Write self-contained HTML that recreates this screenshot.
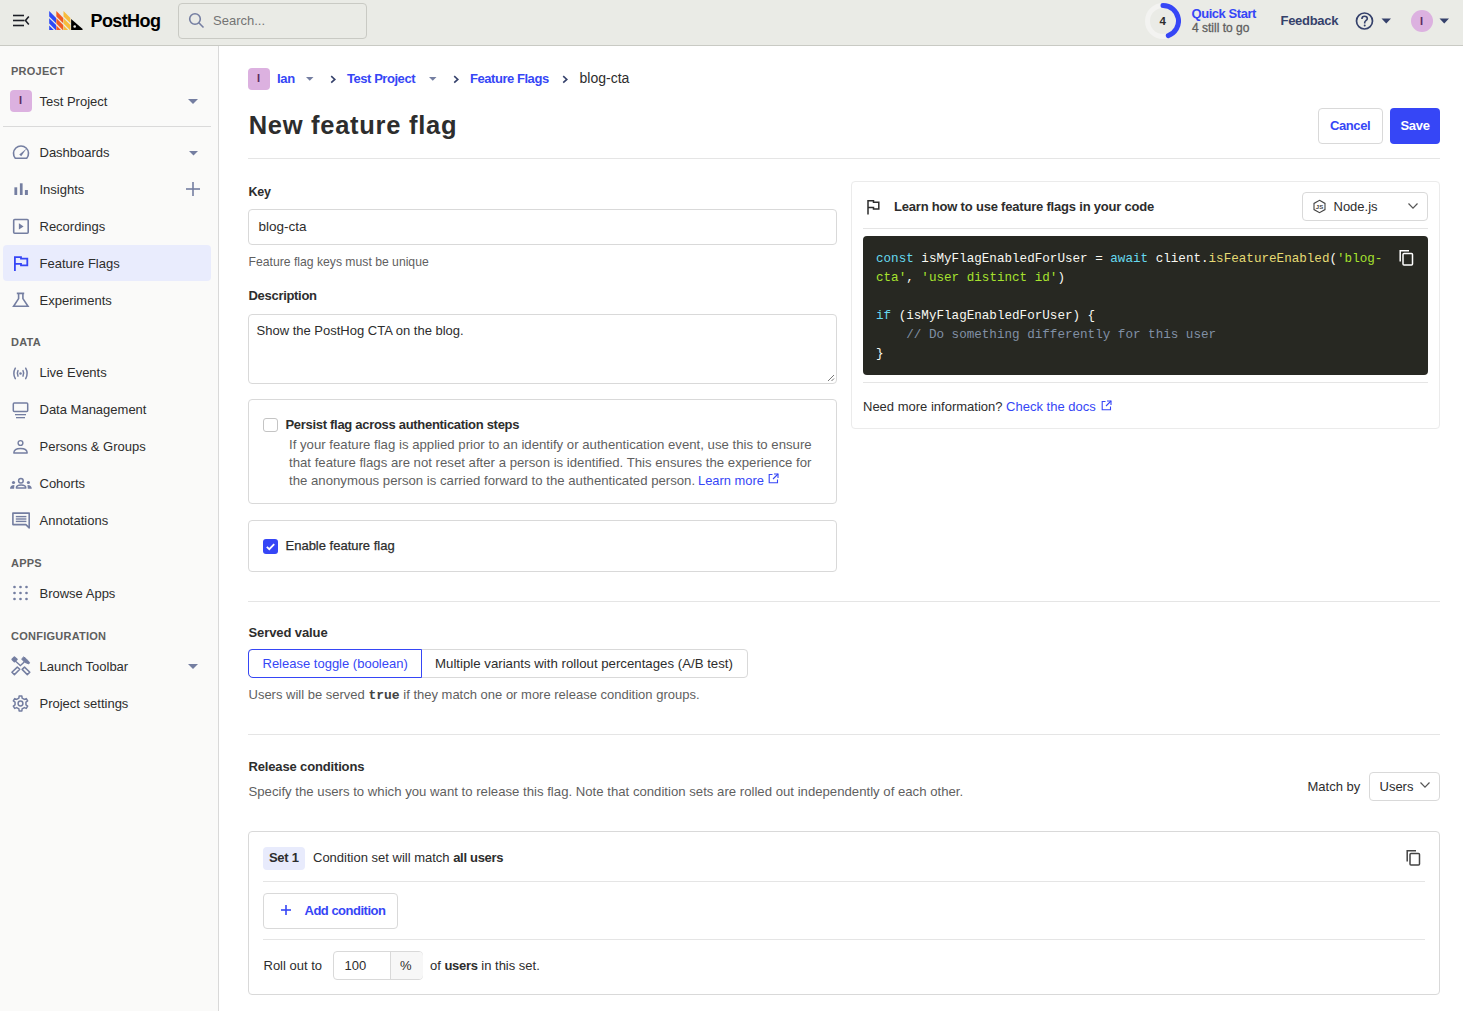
<!DOCTYPE html>
<html><head><meta charset="utf-8"><style>
html,body{margin:0;padding:0;}
body{width:1463px;height:1011px;overflow:hidden;position:relative;background:#fff;font-family:"Liberation Sans",sans-serif;color:#2d2d2d;}
.t{position:absolute;white-space:nowrap;line-height:20px;}
.r{position:absolute;}
.t b{font-weight:700;letter-spacing:-0.3px;}
pre.code{margin:0;font-family:"Liberation Mono",monospace;white-space:pre;}
</style></head><body>
<div class="r" style="left:0px;top:0px;width:1463px;height:45px;background:#eaebe6;border-bottom:1px solid #c9cac4;"></div>
<svg class="r" style="left:11px;top:13px;" width="20" height="15" viewBox="0 0 20 15"><g stroke="#1d1f27" stroke-width="1.6" fill="none" stroke-linecap="butt"><line x1="2" y1="2.5" x2="13" y2="2.5"/><line x1="2" y1="7.5" x2="13.5" y2="7.5"/><line x1="2" y1="12.5" x2="13" y2="12.5"/><polyline points="17.8,3.5 14.5,7.5 17.8,11.5" stroke-linejoin="miter"/></g></svg>
<svg class="r" style="left:49px;top:11px;" width="35" height="20" viewBox="0 0 35 20"><path d="M0.2,0 L7.1000000000000005,6.9 L7.1000000000000005,12.3 L0.2,5.4Z M0.2,7.2 L7.1000000000000005,14.100000000000001 L7.1000000000000005,19 L6.6000000000000005,19 L0.2,12.6Z M0.2,14.4 L4.8,19 L0.2,19Z" fill="#2c48f6"/><path d="M7.3500000000000005,0 L14.25,6.9 L14.25,12.3 L7.3500000000000005,5.4Z M7.3500000000000005,7.2 L14.25,14.100000000000001 L14.25,19 L13.75,19 L7.3500000000000005,12.6Z M7.3500000000000005,14.4 L11.95,19 L7.3500000000000005,19Z" fill="#f15a22"/><path d="M14.5,0 L21.4,6.9 L21.4,12.3 L14.5,5.4Z M14.5,7.2 L21.4,14.100000000000001 L21.4,19 L20.9,19 L14.5,12.6Z M14.5,14.4 L19.1,19 L14.5,19Z" fill="#f7bc3c"/><path d="M22.1,8 L22.1,19 L32.8,19 Q34.4,19 33.4,17.8 Z" fill="#000"/><circle cx="25.7" cy="15.5" r="1.3" fill="#eaebe6"/></svg>
<div class="t " style="left:90.5px;top:10.76px;font-size:18px;font-weight:700;color:#000;letter-spacing:-0.6px;">PostHog</div>
<div class="r" style="left:178px;top:3px;width:189px;height:36px;box-sizing:border-box;border:1px solid #c9cac4;border-radius:4px;background:#eaebe6;"></div>
<svg class="r" style="left:187px;top:11px;" width="20" height="20" viewBox="0 0 20 20"><g fill="none" stroke="#747ea1" stroke-width="1.6"><circle cx="8" cy="8" r="5.3"/><line x1="11.8" y1="11.8" x2="16.5" y2="16.5"/></g></svg>
<div class="t " style="left:213px;top:10.50px;font-size:13px;color:#747474;">Search...</div>
<svg class="r" style="left:1145px;top:3px;" width="36" height="36" viewBox="0 0 36 36"><circle cx="18" cy="18" r="15.5" fill="none" stroke="#f3f3f1" stroke-width="5"/><path d="M18,2.5 A15.5,15.5 0 0 1 23.3,32.57" fill="none" stroke="#3646f6" stroke-width="5" stroke-linecap="round"/></svg>
<div class="t " style="left:1159.5px;top:11.02px;font-size:11.5px;font-weight:700;color:#2d2d2d;">4</div>
<div class="t " style="left:1191.5px;top:3.50px;font-size:13px;font-weight:700;color:#3646f6;letter-spacing:-0.45px;">Quick Start</div>
<div class="t " style="left:1192px;top:17.84px;font-size:12px;color:#5f5f5f;-webkit-text-stroke:0.3px #5f5f5f;">4 still to go</div>
<div class="t " style="left:1280.5px;top:10.50px;font-size:13px;font-weight:700;color:#35416b;letter-spacing:-0.3px;">Feedback</div>
<svg class="r" style="left:1355px;top:11px;" width="20" height="20" viewBox="0 0 20 20"><circle cx="9.5" cy="10" r="8" fill="none" stroke="#35416b" stroke-width="1.7"/><path d="M6.9,7.9 C6.9,6.2 8.1,5.3 9.6,5.3 C11.1,5.3 12.3,6.3 12.3,7.7 C12.3,9.3 9.7,9.6 9.7,11.6 L9.7,12.4" fill="none" stroke="#35416b" stroke-width="1.6"/><circle cx="9.7" cy="14.6" r="1" fill="#35416b"/></svg>
<svg class="r" style="left:1381px;top:18px;" width="11" height="6" viewBox="0 0 11 6"><path d="M0.5,0.5 L10,0.5 L5.25,5.5Z" fill="#35416b"/></svg>
<div class="r" style="left:1411px;top:10px;width:22px;height:22px;background:#dcb1e0;border-radius:50%;"></div>
<div class="t " style="left:1420px;top:10.69px;font-size:11px;font-weight:700;color:#5b2b5d;">I</div>
<svg class="r" style="left:1439px;top:18px;" width="11" height="6" viewBox="0 0 11 6"><path d="M0.5,0.5 L10,0.5 L5.25,5.5Z" fill="#35416b"/></svg>
<div class="r" style="left:0px;top:46px;width:218px;height:965px;background:#fafaf9;border-right:1px solid #d9d9d9;"></div>
<div class="t " style="left:11px;top:61.19px;font-size:11px;font-weight:700;color:#5f5f5f;letter-spacing:0.25px;">PROJECT</div>
<div class="r" style="left:10px;top:90px;width:22px;height:22px;background:#dcb1e0;border-radius:4px;"></div>
<div class="t " style="left:19px;top:90.19px;font-size:11px;font-weight:700;color:#5b2b5d;">I</div>
<div class="t " style="left:39.5px;top:91.50px;font-size:13px;color:#2d2d2d;">Test Project</div>
<svg class="r" style="left:188px;top:99px;" width="10" height="5" viewBox="0 0 10 5"><path d="M0,0 L10,0 L5.0,5Z" fill="#747ea1"/></svg>
<div class="r" style="left:3px;top:126px;width:208px;height:1px;background:#dadada;"></div>
<svg class="r" style="left:12px;top:144px;" width="18" height="18" viewBox="0 0 18 18"><path d="M3.3,14.3 A7.5,7.5 0 1 1 14.7,14.3 Z" fill="none" stroke="#747ea1" stroke-width="1.6" stroke-linejoin="round"/><path d="M7.3,10.6 L14.6,4.4 L9.2,12.2 Z" fill="#747ea1"/></svg>
<div class="t " style="left:39.5px;top:142.50px;font-size:13px;color:#2d2d2d;">Dashboards</div>
<svg class="r" style="left:189px;top:151px;" width="9" height="4.5" viewBox="0 0 9 4.5"><path d="M0,0 L9,0 L4.5,4.5Z" fill="#747ea1"/></svg>
<svg class="r" style="left:12px;top:181px;" width="18" height="18" viewBox="0 0 18 18"><g fill="#747ea1"><rect x="2.4" y="6.3" width="2.8" height="7.7"/><rect x="7.9" y="2.3" width="2.7" height="11.7"/><rect x="12.9" y="9" width="3" height="5"/></g></svg>
<div class="t " style="left:39.5px;top:179.50px;font-size:13px;color:#2d2d2d;">Insights</div>
<svg class="r" style="left:185px;top:181px;" width="16" height="16" viewBox="0 0 16 16"><g stroke="#747ea1" stroke-width="1.6"><line x1="8" y1="1" x2="8" y2="15"/><line x1="1" y1="8" x2="15" y2="8"/></g></svg>
<svg class="r" style="left:12px;top:218px;" width="18" height="18" viewBox="0 0 18 18"><rect x="1.7" y="1.5" width="14.5" height="13.7" rx="1" fill="none" stroke="#747ea1" stroke-width="1.6"/><path d="M6.9,5.2 L11.6,8.4 L6.9,11.6Z" fill="#747ea1"/></svg>
<div class="t " style="left:39.5px;top:216.50px;font-size:13px;color:#2d2d2d;">Recordings</div>
<div class="r" style="left:3px;top:245px;width:208px;height:36px;background:#e9ecfd;border-radius:4px;"></div>
<svg class="r" style="left:12px;top:255px;" width="18" height="18" viewBox="0 0 18 18"><path d="M2.9,16 L2.9,2.1 L9,2.1 L9,3.6 L15.3,3.6 L15.3,10.4 L9,10.4 L9,8.9 L2.9,8.9" fill="none" stroke="#3646f6" stroke-width="1.8"/></svg>
<div class="t " style="left:39.5px;top:253.50px;font-size:13px;color:#2d2d2d;">Feature Flags</div>
<svg class="r" style="left:12px;top:292px;" width="18" height="18" viewBox="0 0 18 18"><path d="M4.8,1.4 L12.2,1.4 M6.6,1.4 L6.6,6.6 L1.6,14.3 L16,14.3 L10.9,6.6 L10.9,1.4" fill="none" stroke="#747ea1" stroke-width="1.6" stroke-linejoin="miter"/></svg>
<div class="t " style="left:39.5px;top:290.50px;font-size:13px;color:#2d2d2d;">Experiments</div>
<div class="t " style="left:11px;top:332.19px;font-size:11px;font-weight:700;color:#5f5f5f;letter-spacing:0.25px;">DATA</div>
<svg class="r" style="left:12px;top:365px;" width="18" height="18" viewBox="0 0 18 18"><g fill="none" stroke="#747ea1" stroke-width="1.5" stroke-linecap="round"><path d="M3.3,3.2 Q0.4,8.4 3.3,13.6"/><path d="M13.7,3.2 Q16.6,8.4 13.7,13.6"/><path d="M6,5.6 Q4.5,8.4 6,11.2"/><path d="M11,5.6 Q12.5,8.4 11,11.2"/></g><circle cx="8.5" cy="8.4" r="1.25" fill="#747ea1"/></svg>
<div class="t " style="left:39.5px;top:362.50px;font-size:13px;color:#2d2d2d;">Live Events</div>
<svg class="r" style="left:12px;top:402px;" width="18" height="18" viewBox="0 0 18 18"><rect x="1.3" y="1" width="14.4" height="8.6" rx="1" fill="none" stroke="#747ea1" stroke-width="1.5"/><rect x="3" y="12" width="11" height="1.3" fill="#747ea1"/><rect x="4" y="15" width="9" height="1.3" fill="#747ea1"/></svg>
<div class="t " style="left:39.5px;top:399.50px;font-size:13px;color:#2d2d2d;">Data Management</div>
<svg class="r" style="left:12px;top:439px;" width="18" height="18" viewBox="0 0 18 18"><circle cx="8.5" cy="4" r="2.4" fill="none" stroke="#747ea1" stroke-width="1.4"/><path d="M1.8,14 Q1.8,9.5 8.5,9.5 Q15.2,9.5 15.2,14 Z" fill="none" stroke="#747ea1" stroke-width="1.4" stroke-linejoin="round"/></svg>
<div class="t " style="left:39.5px;top:436.50px;font-size:13px;color:#2d2d2d;">Persons &amp; Groups</div>
<svg class="r" style="left:8px;top:474px;" width="28" height="20" viewBox="0 0 28 20"><circle cx="12.9" cy="6.7" r="2.3" fill="none" stroke="#747ea1" stroke-width="1.5"/><path d="M8.4,14 C8.4,11.6 10.4,11 13.1,11 C15.8,11 17.8,11.6 17.8,14 Z" fill="none" stroke="#747ea1" stroke-width="1.5" stroke-linejoin="round"/><circle cx="5.5" cy="8.5" r="1.6" fill="#747ea1"/><circle cx="20.4" cy="8.5" r="1.6" fill="#747ea1"/><path d="M2,14.8 C2,12.5 3.5,11.1 6.4,11.1 L6.1,14.8 Z M23.8,14.8 C23.8,12.5 22.3,11.1 19.5,11.1 L19.8,14.8 Z" fill="#747ea1"/></svg>
<div class="t " style="left:39.5px;top:473.50px;font-size:13px;color:#2d2d2d;">Cohorts</div>
<svg class="r" style="left:12px;top:512px;" width="18" height="18" viewBox="0 0 18 18"><path d="M0.9,1.1 L17.2,1.1 L17.2,15.9 L13.9,12.6 L0.9,12.6 Z" fill="none" stroke="#747ea1" stroke-width="1.6" stroke-linejoin="round"/><rect x="3.8" y="3.9" width="10.6" height="1.4" fill="#747ea1"/><rect x="3.8" y="6.3" width="10.6" height="1.4" fill="#747ea1"/><rect x="3.8" y="8.7" width="10.6" height="1.4" fill="#747ea1"/></svg>
<div class="t " style="left:39.5px;top:510.50px;font-size:13px;color:#2d2d2d;">Annotations</div>
<div class="t " style="left:11px;top:553.19px;font-size:11px;font-weight:700;color:#5f5f5f;letter-spacing:0.25px;">APPS</div>
<svg class="r" style="left:12px;top:585px;" width="18" height="18" viewBox="0 0 18 18"><circle cx="2.5" cy="2" r="1.35" fill="#747ea1"/><circle cx="2.5" cy="8" r="1.35" fill="#747ea1"/><circle cx="2.5" cy="14" r="1.35" fill="#747ea1"/><circle cx="8.5" cy="2" r="1.35" fill="#747ea1"/><circle cx="8.5" cy="8" r="1.35" fill="#747ea1"/><circle cx="8.5" cy="14" r="1.35" fill="#747ea1"/><circle cx="14.5" cy="2" r="1.35" fill="#747ea1"/><circle cx="14.5" cy="8" r="1.35" fill="#747ea1"/><circle cx="14.5" cy="14" r="1.35" fill="#747ea1"/></svg>
<div class="t " style="left:39.5px;top:583.50px;font-size:13px;color:#2d2d2d;">Browse Apps</div>
<div class="t " style="left:11px;top:626.19px;font-size:11px;font-weight:700;color:#5f5f5f;letter-spacing:0.25px;">CONFIGURATION</div>
<svg class="r" style="left:8px;top:654px;" width="26" height="26" viewBox="0 0 26 26"><g fill="#747ea1" stroke="#747ea1" stroke-width="1.5" stroke-linejoin="round"><path d="M4.1,5.4 L6.4,3.1 L9,5.4 L6.4,7.7Z"/><path d="M7,6.8 L12.6,11.8" fill="none" stroke-width="1.4"/><path d="M3.9,18.3 L6.4,20.6 L11.8,15.2 L9.3,13.1Z" fill="none"/><path d="M12,12 L16.2,8" fill="none" stroke-width="1.4"/><path d="M13.6,4.9 L15.7,2.9 L18,4.6 L21.5,8.4 L20.9,9.9 L16.6,8.3Z" stroke-width="1"/><path d="M14.1,15.4 L16.5,13.1 L21.8,18.3 L19.3,20.6Z" fill="none"/></g></svg>
<div class="t " style="left:39.5px;top:656.50px;font-size:13px;color:#2d2d2d;">Launch Toolbar</div>
<svg class="r" style="left:188px;top:664px;" width="10" height="5" viewBox="0 0 10 5"><path d="M0,0 L10,0 L5.0,5Z" fill="#747ea1"/></svg>
<svg class="r" style="left:12px;top:695px;" width="18" height="18" viewBox="0 0 18 18"><path d="M6.91,3.13 L7.12,1.03 L9.88,1.03 L10.09,3.13 L12.35,4.44 L14.28,3.56 L15.66,5.96 L13.95,7.19 L13.95,9.81 L15.66,11.04 L14.28,13.44 L12.35,12.56 L10.09,13.87 L9.88,15.97 L7.12,15.97 L6.91,13.87 L4.65,12.56 L2.72,13.44 L1.34,11.04 L3.05,9.81 L3.05,7.19 L1.34,5.96 L2.72,3.56 L4.65,4.44Z" fill="none" stroke="#747ea1" stroke-width="1.5" stroke-linejoin="round"/><circle cx="8.5" cy="8.5" r="2.4" fill="none" stroke="#747ea1" stroke-width="1.5"/></svg>
<div class="t " style="left:39.5px;top:693.50px;font-size:13px;color:#2d2d2d;">Project settings</div>
<div class="r" style="left:248px;top:68px;width:22px;height:22px;background:#dcb1e0;border-radius:4px;"></div>
<div class="t " style="left:257px;top:68.19px;font-size:11px;font-weight:700;color:#5b2b5d;">I</div>
<div class="t " style="left:277px;top:68.50px;font-size:13px;font-weight:700;color:#3646f6;letter-spacing:-0.3px;">Ian</div>
<svg class="r" style="left:306px;top:77px;" width="8" height="4" viewBox="0 0 8 4"><path d="M0,0 L7.5,0 L3.75,3.7Z" fill="#747ea1"/></svg>
<svg class="r" style="left:329.5px;top:75px;" width="7" height="9" viewBox="0 0 7 9"><path d="M1.2,1.2 L4.8,4.4 L1.2,7.6" fill="none" stroke="#35416b" stroke-width="1.6"/></svg>
<div class="t " style="left:347px;top:68.50px;font-size:13px;font-weight:700;color:#3646f6;letter-spacing:-0.45px;">Test Project</div>
<svg class="r" style="left:429px;top:77px;" width="8" height="4" viewBox="0 0 8 4"><path d="M0,0 L7.5,0 L3.75,3.7Z" fill="#747ea1"/></svg>
<svg class="r" style="left:452.5px;top:75px;" width="7" height="9" viewBox="0 0 7 9"><path d="M1.2,1.2 L4.8,4.4 L1.2,7.6" fill="none" stroke="#35416b" stroke-width="1.6"/></svg>
<div class="t " style="left:470px;top:68.50px;font-size:13px;font-weight:700;color:#3646f6;letter-spacing:-0.45px;">Feature Flags</div>
<svg class="r" style="left:561.5px;top:75px;" width="7" height="9" viewBox="0 0 7 9"><path d="M1.2,1.2 L4.8,4.4 L1.2,7.6" fill="none" stroke="#35416b" stroke-width="1.6"/></svg>
<div class="t " style="left:579.5px;top:68.15px;font-size:14px;color:#2d2d2d;">blog-cta</div>
<div class="t " style="left:248.7px;top:115.36px;font-size:25.5px;font-weight:700;color:#2d2d2d;letter-spacing:0.72px;">New feature flag</div>
<div class="r" style="left:1318px;top:108px;width:65px;height:36px;box-sizing:border-box;border:1px solid #d9d9d9;border-radius:4px;background:#fff;"></div>
<div class="t " style="left:1330px;top:115.50px;font-size:13px;font-weight:700;color:#3646f6;letter-spacing:-0.4px;">Cancel</div>
<div class="r" style="left:1390px;top:108px;width:50px;height:36px;background:#3646f6;border-radius:4px;"></div>
<div class="t " style="left:1400.5px;top:115.50px;font-size:13px;font-weight:700;color:#fff;letter-spacing:-0.3px;">Save</div>
<div class="r" style="left:248px;top:158px;width:1192px;height:1px;background:#e5e5e5;"></div>
<div class="t " style="left:248.5px;top:182.17px;font-size:12.5px;font-weight:700;color:#2d2d2d;letter-spacing:-0.3px;">Key</div>
<div class="r" style="left:248px;top:209px;width:589px;height:36px;box-sizing:border-box;border:1px solid #d9d9d9;border-radius:4px;"></div>
<div class="t " style="left:258.5px;top:216.52px;font-size:13.5px;color:#2d2d2d;">blog-cta</div>
<div class="t " style="left:248.5px;top:252.27px;font-size:12.2px;color:#5f5f5f;">Feature flag keys must be unique</div>
<div class="t " style="left:248.5px;top:285.50px;font-size:13px;font-weight:700;color:#2d2d2d;letter-spacing:-0.3px;">Description</div>
<div class="r" style="left:248px;top:314px;width:589px;height:70px;box-sizing:border-box;border:1px solid #d9d9d9;border-radius:4px;"></div>
<div class="t " style="left:256.5px;top:320.50px;font-size:13px;color:#2d2d2d;">Show the PostHog CTA on the blog.</div>
<svg class="r" style="left:826px;top:373px;" width="9" height="9" viewBox="0 0 9 9"><g stroke="#777" stroke-width="1"><line x1="8" y1="2" x2="2" y2="8"/><line x1="8" y1="5.5" x2="5.5" y2="8"/></g></svg>
<div class="r" style="left:248px;top:399px;width:589px;height:105px;box-sizing:border-box;border:1px solid #d9d9d9;border-radius:4px;"></div>
<div class="r" style="left:263px;top:418px;width:15px;height:14px;box-sizing:border-box;border:1.5px solid #c4c4c4;border-radius:3px;background:#fff;"></div>
<div class="t " style="left:285.5px;top:414.50px;font-size:13px;font-weight:700;color:#2d2d2d;letter-spacing:-0.3px;">Persist flag across authentication steps</div>
<div class="t " style="left:289px;top:434.73px;font-size:13.2px;color:#5f5f5f;">If your feature flag is applied prior to an identify or authentication event, use this to ensure</div>
<div class="t " style="left:289px;top:452.73px;font-size:13.2px;color:#5f5f5f;">that feature flags are not reset after a person is identified. This ensures the experience for</div>
<div class="t " style="left:289px;top:470.73px;font-size:13.2px;color:#5f5f5f;">the anonymous person is carried forward to the authenticated person.</div>
<div class="t " style="left:698px;top:470.83px;font-size:12.9px;color:#3646f6;">Learn more</div>
<svg class="r" style="left:767.5px;top:473px;" width="11" height="11" viewBox="0 0 11 11"><g fill="none" stroke="#3646f6" stroke-width="1.1"><path d="M4.5,1.5 L1.2,1.5 L1.2,9.8 L9.5,9.8 L9.5,6.5"/><path d="M6,1 L10,1 L10,5"/><line x1="10" y1="1" x2="5" y2="6"/></g></svg>
<div class="r" style="left:248px;top:520px;width:589px;height:52px;box-sizing:border-box;border:1px solid #d9d9d9;border-radius:4px;"></div>
<div class="r" style="left:263px;top:539px;width:15px;height:15px;background:#3646f6;border-radius:3px;"></div>
<svg class="r" style="left:263px;top:539px;" width="15" height="15" viewBox="0 0 15 15"><path d="M3.8,7.8 L6.3,10.2 L11.2,5.2" fill="none" stroke="#fff" stroke-width="1.8"/></svg>
<div class="t " style="left:285.5px;top:535.50px;font-size:13px;color:#2d2d2d;-webkit-text-stroke:0.25px #2d2d2d;">Enable feature flag</div>
<div class="r" style="left:851px;top:181px;width:589px;height:248px;box-sizing:border-box;border:1px solid #ebebeb;border-radius:4px;"></div>
<svg class="r" style="left:865px;top:199px;" width="17" height="17" viewBox="0 0 17 17"><path d="M3,15.5 L3,1.8 L8.5,1.8 L8.5,3.3 L13.8,3.3 L13.8,10 L8.5,10 L8.5,8.5 L3,8.5" fill="none" stroke="#2d2d2d" stroke-width="1.5"/></svg>
<div class="t " style="left:894px;top:196.50px;font-size:13px;font-weight:700;color:#2d2d2d;letter-spacing:-0.2px;">Learn how to use feature flags in your code</div>
<div class="r" style="left:1302px;top:192px;width:126px;height:29px;box-sizing:border-box;border:1px solid #d9d9d9;border-radius:4px;"></div>
<svg class="r" style="left:1312px;top:199px;" width="15" height="15" viewBox="0 0 15 15"><path d="M7.5,1.3 L13,4.4 L13,10.6 L7.5,13.7 L2,10.6 L2,4.4Z" fill="none" stroke="#444" stroke-width="1.1"/><text x="7.5" y="10" font-size="6" font-family="Liberation Sans" font-weight="700" text-anchor="middle" fill="#444">JS</text></svg>
<div class="t " style="left:1333.5px;top:196.50px;font-size:13px;color:#2d2d2d;">Node.js</div>
<svg class="r" style="left:1407px;top:202px;" width="12" height="8" viewBox="0 0 12 8"><path d="M1.5,1.5 L6,6.2 L10.5,1.5" fill="none" stroke="#555" stroke-width="1.2"/></svg>
<div class="r" style="left:863px;top:228px;width:565px;height:1px;background:#e5e5e5;"></div>
<div class="r" style="left:863px;top:236px;width:565px;height:139px;background:#272822;border-radius:4px;"></div>
<pre class="r code" style="left:876px;top:250.14px;font-size:12.6px;line-height:19px;color:#f8f8f2;"><span style="color:#66d9ef">const</span> isMyFlagEnabledForUser = <span style="color:#66d9ef">await</span> client.<span style="color:#e6db74">isFeatureEnabled</span>(<span style="color:#a6e22e">'blog-</span>
<span style="color:#a6e22e">cta'</span>, <span style="color:#a6e22e">'user distinct id'</span>)

<span style="color:#66d9ef">if</span> (isMyFlagEnabledForUser) {
    <span style="color:#8190a5">// Do something differently for this user</span>
}</pre>
<svg class="r" style="left:1397px;top:248px;" width="20" height="20" viewBox="0 0 20 20"><g fill="none" stroke="#fff" stroke-width="1.5"><path d="M3.2,13.5 L3.2,2.8 L12,2.8"/><rect x="6" y="5.5" width="9.5" height="11.5" rx="1"/></g></svg>
<div class="r" style="left:863px;top:382px;width:565px;height:1px;background:#e5e5e5;"></div>
<div class="t " style="left:863px;top:396.50px;font-size:13px;color:#2d2d2d;">Need more information? <span style="color:#3646f6">Check the docs</span></div>
<svg class="r" style="left:1101px;top:399.5px;" width="11" height="11" viewBox="0 0 11 11"><g fill="none" stroke="#3646f6" stroke-width="1.1"><path d="M4.5,1.5 L1.2,1.5 L1.2,9.8 L9.5,9.8 L9.5,6.5"/><path d="M6,1 L10,1 L10,5"/><line x1="10" y1="1" x2="5" y2="6"/></g></svg>
<div class="r" style="left:248px;top:601px;width:1192px;height:1px;background:#e5e5e5;"></div>
<div class="t " style="left:248.5px;top:622.50px;font-size:13px;font-weight:700;color:#2d2d2d;letter-spacing:-0.1px;">Served value</div>
<div class="r" style="left:248px;top:649px;width:500px;height:29px;box-sizing:border-box;border:1px solid #d9d9d9;border-radius:4px;"></div>
<div class="r" style="left:248px;top:649px;width:174px;height:29px;box-sizing:border-box;border:1.3px solid #3646f6;border-radius:4px 0 0 5px;"></div>
<div class="t " style="left:262.5px;top:654.00px;font-size:13px;color:#3646f6;">Release toggle (boolean)</div>
<div class="t " style="left:435px;top:653.91px;font-size:13.24px;color:#2d2d2d;">Multiple variants with rollout percentages (A/B test)</div>
<div class="t " style="left:248.5px;top:684.50px;font-size:13px;color:#5f5f5f;">Users will be served <span style="font-family:'Liberation Mono',monospace;font-weight:700;color:#444;font-size:13px">true</span> if they match one or more release condition groups.</div>
<div class="r" style="left:248px;top:734px;width:1192px;height:1px;background:#e5e5e5;"></div>
<div class="t " style="left:248.5px;top:756.50px;font-size:13px;font-weight:700;color:#2d2d2d;letter-spacing:-0.15px;">Release conditions</div>
<div class="t " style="left:248.5px;top:782.43px;font-size:13.18px;color:#5f5f5f;">Specify the users to which you want to release this flag. Note that condition sets are rolled out independently of each other.</div>
<div class="t " style="left:1307.5px;top:776.50px;font-size:13px;color:#2d2d2d;">Match by</div>
<div class="r" style="left:1369px;top:772px;width:71px;height:29px;box-sizing:border-box;border:1px solid #d9d9d9;border-radius:4px;"></div>
<div class="t " style="left:1379.5px;top:776.50px;font-size:13px;color:#2d2d2d;">Users</div>
<svg class="r" style="left:1419px;top:781px;" width="12" height="8" viewBox="0 0 12 8"><path d="M1.5,1.5 L6,6.2 L10.5,1.5" fill="none" stroke="#555" stroke-width="1.2"/></svg>
<div class="r" style="left:248px;top:831px;width:1192px;height:164px;box-sizing:border-box;border:1px solid #d9d9d9;border-radius:4px;"></div>
<div class="r" style="left:263px;top:847px;width:42px;height:23px;background:#e8ebfc;border-radius:4px;"></div>
<div class="t " style="left:269px;top:847.50px;font-size:13px;font-weight:700;color:#2d2d2d;letter-spacing:-0.3px;">Set 1</div>
<div class="t " style="left:313px;top:847.50px;font-size:13px;color:#2d2d2d;">Condition set will match <b>all users</b></div>
<svg class="r" style="left:1404px;top:848px;" width="20" height="20" viewBox="0 0 20 20"><g fill="none" stroke="#444" stroke-width="1.5"><path d="M3.2,13.5 L3.2,2.8 L12,2.8"/><rect x="6" y="5.5" width="9.5" height="11.5" rx="1"/></g></svg>
<div class="r" style="left:263px;top:881px;width:1162px;height:1px;background:#e5e5e5;"></div>
<div class="r" style="left:263px;top:893px;width:135px;height:36px;box-sizing:border-box;border:1px solid #d9d9d9;border-radius:4px;"></div>
<svg class="r" style="left:279px;top:903px;" width="14" height="14" viewBox="0 0 14 14"><g stroke="#3646f6" stroke-width="1.6"><line x1="7" y1="2" x2="7" y2="12"/><line x1="2" y1="7" x2="12" y2="7"/></g></svg>
<div class="t " style="left:304.5px;top:900.50px;font-size:13px;font-weight:700;color:#3646f6;letter-spacing:-0.5px;">Add condition</div>
<div class="r" style="left:263px;top:939px;width:1162px;height:1px;background:#e5e5e5;"></div>
<div class="t " style="left:263.5px;top:955.50px;font-size:13px;color:#2d2d2d;">Roll out to</div>
<div class="r" style="left:333px;top:951px;width:90px;height:29px;box-sizing:border-box;border:1px solid #d9d9d9;border-radius:4px;overflow:hidden;"></div>
<div class="r" style="left:390px;top:952px;width:32px;height:27px;background:#f7f7f7;border-left:1px solid #d9d9d9;border-radius:0 4px 4px 0;"></div>
<div class="t " style="left:344.5px;top:955.50px;font-size:13px;color:#2d2d2d;">100</div>
<div class="t " style="left:400px;top:955.50px;font-size:13px;color:#2d2d2d;">%</div>
<div class="t " style="left:430px;top:955.50px;font-size:13px;color:#2d2d2d;">of <b>users</b> in this set.</div>
</body></html>
